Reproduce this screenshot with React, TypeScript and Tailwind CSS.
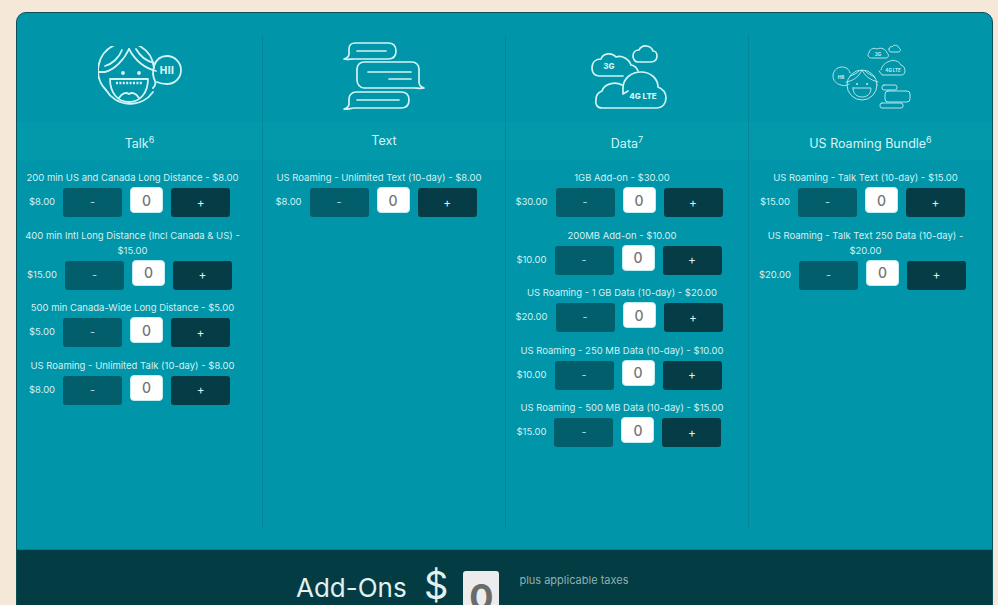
import { useState } from "react"

type Item = { label: string, price: string }
type Column = { title: string, sup?: string, icon: React.ReactNode, items: Item[] }

const TalkIcon = ({ className }: { className?: string }) => (
    <svg viewBox="0 0 86 62" className={className} fill="none" stroke="currentColor" strokeWidth="1.8" strokeLinecap="round" strokeLinejoin="round">
        <path d="M56 22 A28 28 0 1 0 8 44" />
        <path d="M8 44 A28 28 0 0 0 55 46" />
        <path d="M1 26 L7 26 C16 24 26 14 31 3" />
        <path d="M7 20 C14 18 21 12 24 4" />
        <path d="M31 3 C37 14 46 22 58 25" />
        <path d="M38 3 C42 10 48 15 56 17" />
        <circle cx="25" cy="27" r="1" fill="currentColor" />
        <circle cx="41" cy="27" r="1" fill="currentColor" />
        <path d="M12 33 H50 C50 47 42 56 31 56 C20 56 12 47 12 33 Z" />
        <path d="M18 37 H44" strokeDasharray="2 1.4" strokeLinecap="butt" strokeWidth="2.4" />
        <path d="M21 52 C24 47 28 46 31 48 C34 46 38 47 41 52" />
        <path d="M55 42 C57 40 58 38 57 35 C53 27 55 10 69 10 C77 10 83 17 83 24 C83 32 77 38 69 38 C64 38 61 37 59 36" />
        <text x="69" y="28" textAnchor="middle" fontSize="10" fontWeight="800" fill="currentColor" stroke="none" letterSpacing="0.5">HII</text>
    </svg>
)

const TextIcon = ({ className }: { className?: string }) => (
    <svg viewBox="0 0 84 70" className={className} fill="none" stroke="currentColor" strokeWidth="1.7" strokeLinecap="round" strokeLinejoin="round">
        <path d="M2 18 C5 17 7 15 7 13 V8 C7 4 10 2 13 2 H46 C51 2 54 5 54 10 C54 15 51 18 46 18 H12 C9 18 5 19 2 18 Z" />
        <path d="M15 10 H44" />
        <path d="M82 47 C79 46 77 44 77 41 V28 C77 24 74 21 70 21 H22 C18 21 15 24 15 28 V39 C15 43 18 47 22 47 H72 C75 47 79 48 82 47 Z" />
        <path d="M26 31 H69 M47 38 H69" />
        <path d="M2 68 C5 67 7 65 7 63 V58 C7 54 10 51 14 51 H59 C64 51 67 54 67 59 C67 64 64 67 59 67 H12 C9 67 5 69 2 68 Z" />
        <path d="M15 59 H57" />
    </svg>
)

const DataIcon = ({ className }: { className?: string }) => (
    <svg viewBox="0 0 76 66" className={className} fill="none" stroke="currentColor" strokeWidth="1.7" strokeLinecap="round" strokeLinejoin="round">
        <path d="M32 32 H8 C3 32 1 28 1 24 C1 18 5 15 10 15 C12 9 21 8 25 13 C31 11 38 15 40 21 C43 21 46 24 47 27" />
        <path d="M47 18 H60 C64 18 66 15 66 12 C66 9 64 7 62 7 C60 1 51 0 48 6 C44 6 42 9 42 12 C42 15 44 18 47 18 Z" />
        <path d="M37 47 L32 50 V44 C32 34 41 28 50 28 C60 28 67 35 67 43 C72 45 75 49 75 54 C75 60 71 64 66 64 H11 C6 64 4 60 5 56 C5 51 8 48 11 47 C13 40 24 37 31 41" />
        <text x="18" y="25" textAnchor="middle" fontSize="8" fontWeight="800" fill="currentColor" stroke="none">3G</text>
        <text x="52" y="55" textAnchor="middle" fontSize="8" fontWeight="800" fill="currentColor" stroke="none">4G LTE</text>
    </svg>
)

const BundleIcon = ({ className }: { className?: string }) => (
    <svg viewBox="0 0 80 66" className={className} fill="none" stroke="currentColor" strokeWidth="1" strokeLinecap="round" strokeLinejoin="round">
        <circle cx="30" cy="41" r="15" />
        <path d="M14 38 C22 37 27 32 30 26 C33 32 38 36 46 38" />
        <path d="M18 32 C22 31 25 29 27 27 M33 27 C36 30 39 31 43 33" />
        <circle cx="25" cy="40" r="0.6" fill="currentColor" />
        <circle cx="35" cy="40" r="0.6" fill="currentColor" />
        <path d="M21 44 H39 C39 50 35 53 30 53 C25 53 21 50 21 44 Z" />
        <path d="M17 40 C14 42 11 42 9 41 C4 40 1 36 1 32 C1 27 5 23 10 23 C14 23 17 25 18 29" />
        <text x="9" y="35" textAnchor="middle" fontSize="5" fontWeight="800" fill="currentColor" stroke="none">HII</text>
        <path d="M42 14 H54 C57 14 57 10 55 9 C54 5 49 3 45 5 C41 3 37 6 37 9 C35 10 36 14 39 14 Z" />
        <text x="46" y="12" textAnchor="middle" fontSize="4.5" fontWeight="800" fill="currentColor" stroke="none">3G</text>
        <path d="M57 5 C57 3 59 2 60 3 C62 0 66 1 67 4 C69 5 69 8 66 8 H59 C57 8 57 6 57 5 Z" />
        <path d="M49 26 C50 18 64 12 69 21 C72 22 73 25 73 27 C73 30 71 31 69 31 H50 L47 27" />
        <text x="61" y="28" textAnchor="middle" fontSize="4.5" fontWeight="800" fill="currentColor" stroke="none">4G LTE</text>
        <rect x="50" y="41" width="15" height="5" rx="2" />
        <rect x="53" y="47" width="25" height="11" rx="3" />
        <rect x="48" y="59" width="23" height="5" rx="2" />
    </svg>
)

const columns: Column[] = [
    {
        title: "Talk", sup: "6",
        icon: <TalkIcon className="ml-[3px] mt-[11px] h-[62px] w-[86px]" />,
        items: [
            { label: "200 min US and Canada Long Distance - $8.00", price: "$8.00" },
            { label: "400 min Intl Long Distance (Incl Canada & US) - $15.00", price: "$15.00" },
            { label: "500 min Canada-Wide Long Distance - $5.00", price: "$5.00" },
            { label: "US Roaming - Unlimited Talk (10-day) - $8.00", price: "$8.00" },
        ],
    },
    {
        title: "Text",
        icon: <TextIcon className="mt-[6px] h-[70px] w-[84px]" />,
        items: [
            { label: "US Roaming - Unlimited Text (10-day) - $8.00", price: "$8.00" },
        ],
    },
    {
        title: "Data", sup: "7",
        icon: <DataIcon className="ml-[3px] mt-[9px] h-[66px] w-[76px]" />,
        items: [
            { label: "1GB Add-on - $30.00", price: "$30.00" },
            { label: "200MB Add-on - $10.00", price: "$10.00" },
            { label: "US Roaming - 1 GB Data (10-day) - $20.00", price: "$20.00" },
            { label: "US Roaming - 250 MB Data (10-day) - $10.00", price: "$10.00" },
            { label: "US Roaming - 500 MB Data (10-day) - $15.00", price: "$15.00" },
        ],
    },
    {
        title: "US Roaming Bundle", sup: "6",
        icon: <BundleIcon className="ml-[3px] mt-[9px] h-[66px] w-[80px] opacity-85" />,
        items: [
            { label: "US Roaming - Talk Text (10-day) - $15.00", price: "$15.00" },
            { label: "US Roaming - Talk Text 250 Data (10-day) - $20.00", price: "$20.00" },
        ],
    },
]

const Row = ({ item }: { item: Item }) => {
    const [count, setCount] = useState(0)

    return (
        <div className="mb-[10.5px]">
            <p className="pl-[2px] pr-[12px] text-center text-[9.5px] leading-[15px] text-[#d2f1f4]">{item.label}</p>
            <div className="mt-[3px] flex items-start justify-center pr-[16px]">
                <span className="mr-[8px] pt-[6px] text-[9.5px] leading-[15px] text-[#d2f1f4]">{item.price}</span>
                <button
                    className="h-[29px] w-[59px] rounded-[3px] bg-[#035e6b] text-[11px] text-[#a9dbe1]"
                    onClick={() => setCount(Math.max(0, count - 1))}
                >
                    -
                </button>
                <span className="mx-[8px] -mt-[1px] flex h-[26px] w-[33px] items-center justify-center rounded-[4px] border border-[#bfeef2] bg-white text-[14px] font-medium text-[#757575]">{count}</span>
                <button
                    className="h-[29px] w-[59px] rounded-[3px] bg-[#053c45] text-[12px] text-[#d7f1f4]"
                    onClick={() => setCount(count + 1)}
                >
                    +
                </button>
            </div>
        </div>
    )
}

export default function App() {
    return (
        <div className="h-[605px] w-[998px] overflow-hidden bg-[#f5e8d9] pl-[16px] pr-[5px] pt-[12px] font-['Inter',sans-serif]">
            <div className="h-[640px] overflow-hidden rounded-t-[10px] border border-[#0b4f58] bg-[#0095a8]">
                <div className="grid h-[536px] grid-cols-[246px_243px_243px_1fr] pb-[21px] pt-[22px]">
                    {columns.map((column, i) => (
                        <section key={column.title} className={i < 3 ? "border-r border-[#078598]" : ""}>
                            <div className="flex h-[87px] justify-center text-[#d3f4f5]">{column.icon}</div>
                            <h2 className={`flex h-[38px] items-center justify-center bg-[#0299ab] text-[12.5px] text-[#d9f4f6] ${column.sup ? "pt-[6px]" : ""}`}>
                                {column.title}
                                {column.sup && <sup className="text-[9px]">{column.sup}</sup>}
                            </h2>
                            <div className={`pt-[10px] ${i === 0 ? "pr-[4px]" : ""}`}>
                                {column.items.map(item => <Row key={item.label} item={item} />)}
                            </div>
                        </section>
                    ))}
                </div>
                <div className="flex h-[90px] items-start border-t border-[#127a86] bg-[#033c42] pl-[279px] pt-[14px]">
                    <span className="mt-[6px] w-[110px] whitespace-nowrap text-[26px] leading-[36px] text-[#e2f1f1]">Add-Ons</span>
                    <span className="ml-[18px] -mt-[2px] text-[38px] leading-[46px] text-[#e2f1f1]">$</span>
                    <span className="ml-[15px] mt-[7px] flex h-[52px] w-[36px] items-center justify-center rounded-[3px] bg-[#ececec] text-[36px] font-bold text-[#6b6b6b]">0</span>
                    <span className="ml-[20px] mt-[8px] text-[11px] text-[#8fb0b3]">plus applicable taxes</span>
                </div>
            </div>
        </div>
    )
}
